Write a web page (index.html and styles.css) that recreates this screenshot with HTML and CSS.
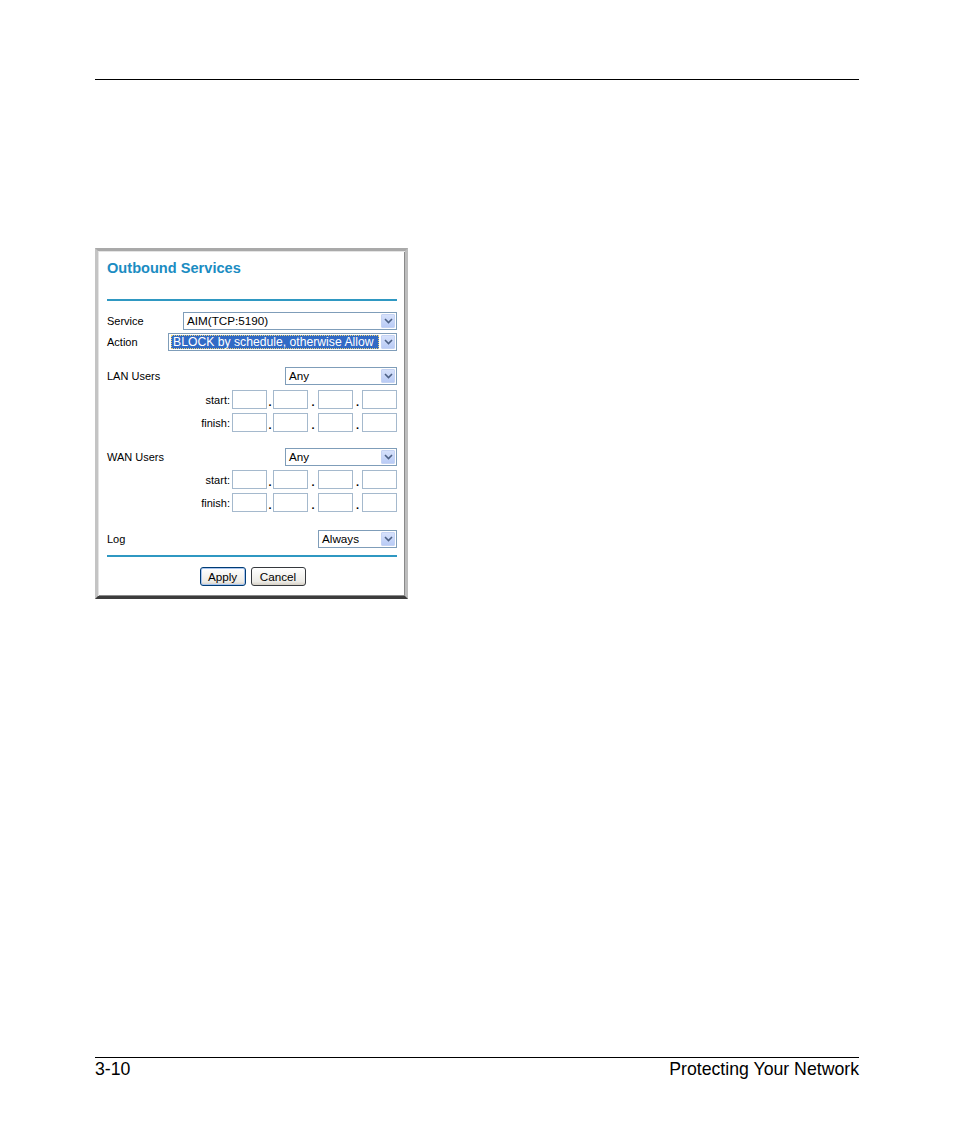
FILE: index.html
```html
<!DOCTYPE html>
<html>
<head>
<meta charset="utf-8">
<link rel="stylesheet" href="styles.css">
</head>
<body>
<div class="page">
  <div class="hrule top"></div>

  <div class="panel">
    <div class="title">Outbound Services</div>
    <div class="brule first"></div>

    <div class="row r-service">
      <span class="lbl">Service</span>
      <div class="select w-service"><span class="val">AIM(TCP:5190)</span><span class="arrow"><svg width="9" height="6" viewBox="0 0 9 6"><path d="M1 1 L4.5 4.5 L8 1" fill="none" stroke="#4d6185" stroke-width="1.6"/></svg></span></div>
    </div>
    <div class="row r-action">
      <span class="lbl">Action</span>
      <div class="select w-action"><span class="val sel"><span class="hl">BLOCK by schedule, otherwise Allow</span></span><span class="arrow"><svg width="9" height="6" viewBox="0 0 9 6"><path d="M1 1 L4.5 4.5 L8 1" fill="none" stroke="#4d6185" stroke-width="1.6"/></svg></span></div>
    </div>

    <div class="row r-group">
      <span class="lbl">LAN Users</span>
      <div class="select w-users"><span class="val">Any</span><span class="arrow"><svg width="9" height="6" viewBox="0 0 9 6"><path d="M1 1 L4.5 4.5 L8 1" fill="none" stroke="#4d6185" stroke-width="1.6"/></svg></span></div>
    </div>
    <div class="row ip r-ip1 lan-start">
      <span class="iplbl">start:</span>
      <span class="box"></span><span class="dot d1">.</span><span class="box"></span><span class="dot d2">.</span><span class="box"></span><span class="dot d3">.</span><span class="box"></span>
    </div>
    <div class="row ip r-ip2">
      <span class="iplbl">finish:</span>
      <span class="box"></span><span class="dot d1">.</span><span class="box"></span><span class="dot d2">.</span><span class="box"></span><span class="dot d3">.</span><span class="box"></span>
    </div>

    <div class="row r-group">
      <span class="lbl">WAN Users</span>
      <div class="select w-users"><span class="val">Any</span><span class="arrow"><svg width="9" height="6" viewBox="0 0 9 6"><path d="M1 1 L4.5 4.5 L8 1" fill="none" stroke="#4d6185" stroke-width="1.6"/></svg></span></div>
    </div>
    <div class="row ip r-ip1">
      <span class="iplbl">start:</span>
      <span class="box"></span><span class="dot d1">.</span><span class="box"></span><span class="dot d2">.</span><span class="box"></span><span class="dot d3">.</span><span class="box"></span>
    </div>
    <div class="row ip r-ip2">
      <span class="iplbl">finish:</span>
      <span class="box"></span><span class="dot d1">.</span><span class="box"></span><span class="dot d2">.</span><span class="box"></span><span class="dot d3">.</span><span class="box"></span>
    </div>

    <div class="row r-log">
      <span class="lbl">Log</span>
      <div class="select w-log"><span class="val">Always</span><span class="arrow"><svg width="9" height="6" viewBox="0 0 9 6"><path d="M1 1 L4.5 4.5 L8 1" fill="none" stroke="#4d6185" stroke-width="1.6"/></svg></span></div>
    </div>
    <div class="brule second"></div>

    <div class="buttons">
      <span class="btn default">Apply</span>
      <span class="btn">Cancel</span>
    </div>
  </div>

  <div class="hrule bottom"></div>
  <div class="footer">
    <span>3-10</span>
    <span>Protecting Your Network</span>
  </div>
</div>
</body>
</html>
```

FILE: styles.css
```css
html, body {
  margin: 0;
  padding: 0;
  background: #ffffff;
}
.page {
  width: 954px;
  height: 1145px;
  overflow: hidden;
  font-family: "Liberation Sans", Arial, sans-serif;
  color: #000;
}
.hrule {
  height: 1px;
  background: #000;
  margin-left: 95px;
  width: 764px;
}
.hrule.top { margin-top: 79px; }
.hrule.bottom { margin-top: 458px; }

.panel {
  box-sizing: border-box;
  width: 313px;
  height: 351px;
  margin-left: 95px;
  margin-top: 168px;
  border-top: 3px solid #a9a9a9;
  border-left: 3px solid #c4c4c4;
  border-right: 3px solid #bdbdbd;
  border-bottom: 3px solid #3c3c3c;
  box-shadow: inset 1px 1px 0 #e4e4e4, inset -1px -1px 0 #8a8a8a;
  padding: 9px 8px 0 9px;
  background: #fff;
}
.title {
  font-weight: bold;
  font-size: 14.6px;
  line-height: 17px;
  color: #1b8cc2;
  height: 17px;
}
.brule {
  height: 2px;
  background: #2f98c2;
}
.brule.first { margin-top: 22px; }
.brule.second { margin-top: 7px; }

.row {
  display: flex;
  align-items: center;
  height: 18px;
  font-size: 11px;
}
.r-service { margin-top: 11px; }
.r-action { margin-top: 3px; }
.r-group { margin-top: 16px; }
.r-log { margin-top: 18px; }
.lbl { flex: 1; }

.select {
  box-sizing: border-box;
  height: 18px;
  border: 1px solid #7f9db9;
  background: #fff;
  display: flex;
  align-items: center;
  padding: 1px;
}
.w-service { width: 214px; }
.w-action { width: 229px; }
.w-users { width: 112px; }
.w-log { width: 79px; }
.val {
  flex: 1;
  min-width: 0;
  font-size: 11.7px;
  padding-left: 2px;
  white-space: nowrap;
  overflow: hidden;
  line-height: 14px;
}
.val.sel {
  padding-left: 1px;
}
.hl {
  display: block;
  background: #316ac5;
  color: #fff;
  font-size: 12.2px;
  outline: 1px dotted #e8d27a;
  outline-offset: -1px;
  padding: 0 0 0 2px;
  line-height: 14px;
  overflow: hidden;
}
.arrow {
  box-sizing: border-box;
  flex: none;
  width: 14px;
  height: 14px;
  margin-left: 2px;
  background: linear-gradient(#d6e1fb, #b9cbf5);
  border: 1px solid #c5d3f3;
  border-radius: 1px;
  display: flex;
  align-items: center;
  justify-content: center;
}

.ip {
  justify-content: flex-end;
  height: 19px;
}
.r-ip1 { margin-top: 4px; }
.r-ip1.lan-start { margin-top: 5px; }
.r-ip2 { margin-top: 4px; }
.iplbl {
  margin-right: 2px;
}
.box {
  box-sizing: border-box;
  width: 35px;
  height: 19px;
  border: 1px solid #a5b9cd;
  background: #fff;
}
.dot {
  text-align: center;
  font-weight: bold;
  font-size: 11px;
  align-self: flex-end;
  line-height: 14px;
}
.d1 { width: 6px; }
.d2 { width: 10px; }
.d3 { width: 9px; }

.buttons {
  display: flex;
  justify-content: center;
  gap: 5px;
  margin-top: 10px;
  padding-left: 1px;
}
.btn {
  box-sizing: border-box;
  height: 19px;
  font-size: 11.7px;
  line-height: 17px;
  border: 1px solid #003c74;
  border-radius: 3px;
  background: linear-gradient(#ffffff, #ecebe6 80%, #d6d0c5);
  padding: 0 6px;
  text-align: center;
}
.btn.default {
  width: 46px;
  box-shadow: inset 0 0 0 1px #a8c4ef;
}
.btn:not(.default) {
  width: 55px;
  border-color: #36393d;
}

.footer {
  margin-left: 95px;
  width: 764px;
  margin-top: 1px;
  display: flex;
  justify-content: space-between;
  font-size: 17.7px;
  line-height: 20px;
}
```
